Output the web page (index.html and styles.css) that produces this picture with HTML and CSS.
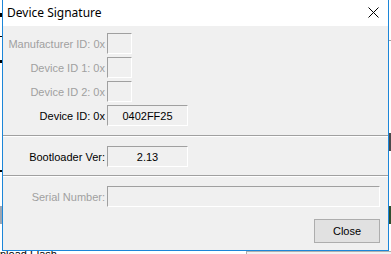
FILE: index.html
```html
<!DOCTYPE html>
<html>
<head>
<meta charset="utf-8">
<link rel="stylesheet" href="styles.css">
</head>
<body>
<div class="desktop">
  <div class="bg-mark m1"></div>
  <div class="bg-mark m2"></div>
  <div class="bg-mark m3"></div>
  <div class="bg-mark m4"></div>
  <div class="bg-gray-left"></div>
  <div class="bg-dark-right"></div>
  <div class="bg-green-right"></div>
  <div class="bg-line-right"></div>
  <div class="bg-text">Download Flash</div>
  <div class="bg-panel"></div>

  <div class="window">
    <div class="titlebar">
      <span class="title">Device Signature</span>
      <svg class="close-x" width="11" height="11" viewBox="0 0 11 11"><path d="M0.5 0.5 L10.5 10.5 M10.5 0.5 L0.5 10.5" stroke="#000" stroke-width="1" fill="none"/></svg>
    </div>
    <div class="client">
      <div class="fields">
        <div class="row"><span class="lbl dis">Manufacturer ID: 0x</span><div class="box small"></div></div>
        <div class="row"><span class="lbl dis">Device ID 1: 0x</span><div class="box small"></div></div>
        <div class="row"><span class="lbl dis">Device ID 2: 0x</span><div class="box small"></div></div>
        <div class="row"><span class="lbl">Device ID: 0x</span><div class="box medium">0402FF25</div></div>
      </div>
      <div class="sep"></div>
      <div class="row"><span class="lbl">Bootloader Ver:</span><div class="box medium">2.13</div></div>
      <div class="sep sep2"></div>
      <div class="row"><span class="lbl dis">Serial Number:</span><div class="box wide"></div></div>
      <div class="actions"><button class="btn">Close</button></div>
    </div>
  </div>
</div>
</body>
</html>
```

FILE: styles.css
```css
html, body {
  margin: 0;
  padding: 0;
  background: #ffffff;
}
.desktop {
  position: relative;
  width: 391px;
  height: 254px;
  overflow: hidden;
  font-family: "Liberation Sans", Arial, sans-serif;
  font-size: 11px;
}
.bg-mark { position: absolute; left: 0; width: 2px; background: #000; }
.m1 { top: 13px; height: 4px; }
.m2 { top: 36px; height: 1px; }
.m3 { top: 60px; height: 3px; }
.m4 { top: 170px; height: 2px; }
.bg-gray-left { position: absolute; left: 0; top: 206px; width: 2px; height: 18px; background: #9ea7b3; }
.bg-dark-right { position: absolute; left: 389px; top: 133px; width: 2px; height: 18px; background: #4a4a4a; }
.bg-green-right { position: absolute; left: 389px; top: 206px; width: 2px; height: 18px; background: #2f4f2f; }
.bg-line-right { position: absolute; left: 389px; top: 40px; width: 2px; height: 1px; background: #a0a0a0; }
.bg-text {
  position: absolute; left: -22px; top: 249px;
  font-size: 11px; color: #000; line-height: 11px;
}
.bg-panel {
  position: absolute; left: 246px; top: 251px; width: 150px; height: 10px;
  background: #f0f0f0; border: 1px solid #b0b0b0;
}

.window {
  position: absolute;
  left: 2px;
  top: 0;
  width: 385px;
  height: 250px;
  border-left: 1px solid #1c86d8;
  border-right: 1px solid #1c86d8;
  border-bottom: 1px solid #1c86d8;
  display: flex;
  flex-direction: column;
  background: #f0f0f0;
}
.titlebar {
  height: 26px;
  background: #ffffff;
  display: flex;
  align-items: center;
  justify-content: space-between;
  padding: 0 9px 0 4px;
  flex: none;
}
.title {
  font-family: "Noto Sans", "Open Sans", sans-serif;
  font-size: 12px;
  color: #000;
  margin-top: -1px;
}
.close-x { display: block; margin-top: -1px; }

.client {
  flex: 1;
  padding: 7px 8px 0 0;
  display: flex;
  flex-direction: column;
}
.fields { display: flex; flex-direction: column; gap: 3px; }
.row { display: flex; align-items: center; height: 21px; }
.lbl {
  width: 102px;
  text-align: right;
  margin-right: 2px;
  color: #000;
  white-space: nowrap;
}
.lbl.dis { color: #a0a0a0; }
.box {
  box-sizing: border-box;
  height: 21px;
  border-top: 1px solid #a0a0a0;
  border-left: 1px solid #a0a0a0;
  border-right: 1px solid #ffffff;
  border-bottom: 1px solid #ffffff;
  background: #f0f0f0;
  color: #000;
  display: flex;
  align-items: center;
  justify-content: center;
}
.box.small { width: 25px; }
.box.medium { width: 81px; }
.box.wide { flex: 1; }
.sep {
  height: 0;
  border-top: 1px solid #a0a0a0;
  border-bottom: 1px solid #ffffff;
  margin: 9px -8px 9px 0;
}
.sep2 { margin-top: 8px; }
.actions {
  display: flex;
  justify-content: flex-end;
  margin-top: 12px;
}
.btn {
  box-sizing: border-box;
  width: 66px;
  height: 24px;
  background: #e1e1e1;
  border: 1px solid #adadad;
  font-family: "Liberation Sans", Arial, sans-serif;
  font-size: 11px;
  color: #000;
  padding: 0;
}
```
